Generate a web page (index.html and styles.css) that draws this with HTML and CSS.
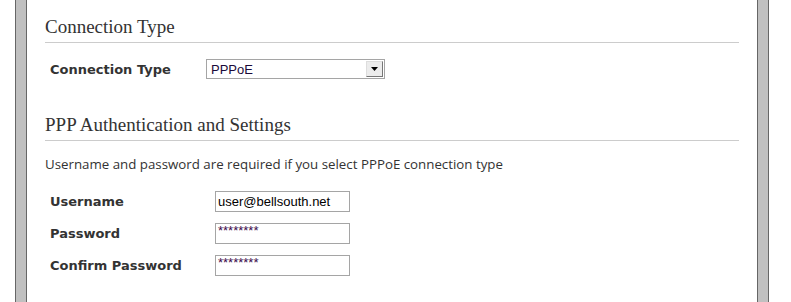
FILE: index.html
```html
<!DOCTYPE html>
<html lang="en">
<head>
  <meta charset="UTF-8" />
  <title>Connection Settings</title>
  <link rel="stylesheet" href="styles.css">
</head>
<body>
  <div class="pagina">
    <div class="trilho"></div>

    <div class="conteudo">
      <!-- Connection type -->
      <h2 class="secao">Connection Type</h2>
      <div class="linha linha-tipo">
        <label class="rotulo rotulo-tipo">Connection Type</label>
        <div class="seletor">
          <span class="seletor-valor">PPPoE</span>
          <span class="seletor-botao">
            <svg width="7" height="4" viewBox="0 0 7 4"><path d="M0 0h7L3.5 4z" fill="#000"/></svg>
          </span>
        </div>
      </div>

      <!-- PPP auth -->
      <h2 class="secao secao-ppp">PPP Authentication and Settings</h2>
      <p class="aviso">Username and password are required if you select PPPoE connection type</p>

      <div class="linha">
        <label class="rotulo">Username</label>
        <div class="campo">user@bellsouth.net</div>
      </div>
      <div class="linha">
        <label class="rotulo">Password</label>
        <div class="campo campo-senha">********</div>
      </div>
      <div class="linha">
        <label class="rotulo">Confirm Password</label>
        <div class="campo campo-senha">********</div>
      </div>
    </div>

    <div class="trilho"></div>
  </div>
</body>
</html>
```

FILE: styles.css
```css
body {
  margin: 0;
  background: #fff;
  font-family: "Open Sans", Arial, sans-serif;
  color: #333;
}

.pagina {
  display: flex;
  height: 302px;
  padding: 0 22px 0 15px;
  overflow: hidden;
}

.trilho {
  width: 10px;
  flex-shrink: 0;
  background: #c0c0c0;
  border-left: 1px solid #666;
  border-right: 1px solid #666;
}

.conteudo {
  flex: 1;
  padding: 0 18px;
}

.secao {
  font-family: "Liberation Serif", "Times New Roman", serif;
  font-weight: normal;
  font-size: 19px;
  line-height: 24px;
  color: #333;
  margin: 15px 0 0;
  padding-bottom: 3px;
  border-bottom: 1px solid #ccc;
}

.secao-ppp {
  margin-top: 33px;
}

.linha {
  display: flex;
  align-items: center;
  height: 22px;
  margin-top: 10px;
  padding-left: 5px;
}

.linha-tipo {
  margin-top: 15px;
}

.rotulo {
  width: 165px;
  font-family: "DejaVu Sans", Verdana, sans-serif;
  font-size: 13px;
  font-weight: bold;
  color: #333;
}

.rotulo-tipo {
  width: 156px;
}

.seletor {
  display: flex;
  align-items: center;
  width: 177px;
  height: 18px;
  border: 1px solid #a5a5a5;
  font-family: Arial, "Liberation Sans", sans-serif;
  font-size: 13px;
  color: #1a0a3a;
}

.seletor-valor {
  flex: 1;
  padding-left: 4px;
}

.seletor-botao {
  width: 15px;
  height: 14px;
  margin-right: 1px;
  border: 1px solid;
  border-color: #ddd #777 #777 #ddd;
  background: #ececec;
  display: flex;
  align-items: center;
  justify-content: center;
}

.aviso {
  margin: 14px 0 17px;
  font-size: 13.3px;
  color: #333;
}

.campo {
  width: 131px;
  height: 19px;
  border: 1px solid #a5a5a5;
  padding-left: 2px;
  font-family: Arial, "Liberation Sans", sans-serif;
  font-size: 13px;
  line-height: 19px;
  color: #000;
}

.campo-senha {
  line-height: 14px;
  color: #3a0a4a;
}
```
